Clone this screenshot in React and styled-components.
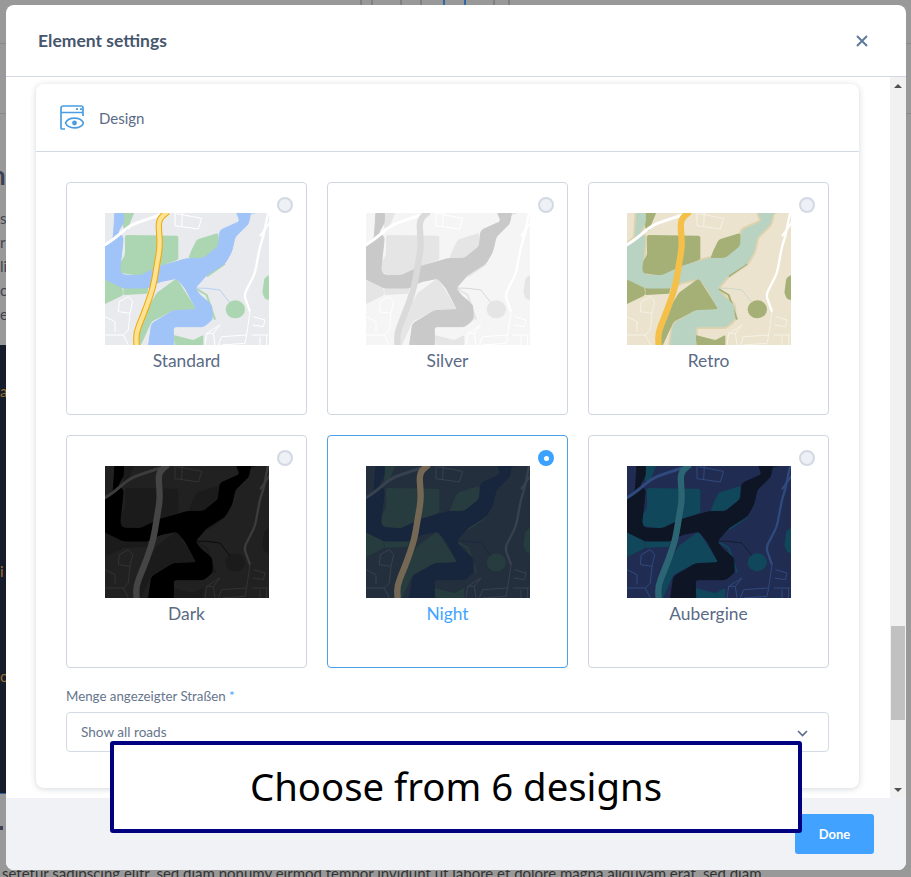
import React from "react";
import styled, { createGlobalStyle } from "styled-components";

const Global = createGlobalStyle`
  html, body { margin: 0; padding: 0; background: #999; }
  * { box-sizing: border-box; }
`;

const Page = styled.div`
  position: relative;
  width: 911px;
  height: 877px;
  overflow: hidden;
  background: #999;
  font-family: "Lato", "Noto Sans", sans-serif;
`;

/* ---- dimmed page behind the dialog ---- */
const Backdrop = styled.div`
  display: flex;
  flex-direction: column;
  height: 877px;
`;
const TopStrip = styled.div`
  height: 44px;
  flex: none;
  display: flex;
  align-items: flex-start;
  padding-left: 360px;
  border-bottom: 1px solid #8a8a8a;
`;
const Trace = styled.span`
  height: 5px;
  width: ${(p) => p.$w}px;
  margin-right: ${(p) => p.$gap}px;
  border-left: 2px solid ${(p) => p.$c};
  border-right: 2px solid ${(p) => p.$c};
`;
const SecondStrip = styled.div`
  height: 70px;
  flex: none;
  border-bottom: 1px solid #8a8a8a;
`;
const BackHeading = styled.div`
  margin-top: 46px;
  height: 30px;
  flex: none;
  font-size: 26px;
  line-height: 30px;
  font-weight: 700;
  color: #3b4258;
  text-indent: -9px;
`;
const BackText = styled.div`
  margin-top: 16px;
  height: 139px;
  flex: none;
  font-size: 15px;
  line-height: 24px;
  color: #3f4350;
  white-space: pre;
`;
const DarkBand = styled.div`
  width: 600px;
  height: 449px;
  flex: none;
  background: #161c2a;
  border-bottom: 1px solid #2a5f95;
  padding-top: 37px;
  font-size: 15px;
  color: #9a6c38;
`;
const DarkLine = styled.div`
  height: ${(p) => p.$h}px;
`;
const BackMark = styled.div`
  width: 3px;
  height: 4px;
  flex: none;
  margin-top: 32px;
  background: #3b4258;
`;
const BackFoot = styled.div`
  margin-top: 33px;
  padding-left: 2px;
  font-size: 15px;
  line-height: 20px;
  color: #333;
  white-space: nowrap;
`;

/* ---- dialog ---- */
const Modal = styled.div`
  position: absolute;
  left: 6px;
  top: 5px;
  width: 900px;
  height: 865px;
  background: #fff;
  border-radius: 8px;
  display: flex;
  flex-direction: column;
  overflow: hidden;
`;
const ModalHeader = styled.header`
  height: 72px;
  flex: none;
  border-bottom: 1px solid #d3d9e4;
  display: flex;
  align-items: center;
  justify-content: space-between;
  padding: 0 38px 0 32px;
`;
const ModalTitle = styled.h2`
  margin: 0;
  font-size: 17.5px;
  font-weight: 700;
  color: #46566d;
`;
const CloseIcon = styled.svg`
  width: 12px;
  height: 12px;
  display: block;
`;
const ModalBody = styled.div`
  flex: 1;
  min-height: 0;
  display: flex;
`;
const ScrollArea = styled.div`
  flex: 1;
  min-width: 0;
  padding: 7px 31px 0 30px;
  overflow: hidden;
`;
const Scrollbar = styled.div`
  width: 16px;
  flex: none;
  background: #f1f1f1;
  display: flex;
  flex-direction: column;
  align-items: center;
`;
const ArrowBox = styled.div`
  height: 17px;
  flex: none;
  display: flex;
  align-items: center;
  justify-content: center;
`;
const Arrow = styled.span`
  width: 0;
  height: 0;
  border-left: 4px solid transparent;
  border-right: 4px solid transparent;
  ${(p) => (p.$down ? "border-top: 4px solid #505050;" : "border-bottom: 4px solid #505050;")}
`;
const Thumb = styled.div`
  width: 14px;
  height: 94px;
  margin-top: 532px;
  background: #c1c1c1;
`;
const ArrowSpacer = styled.div`
  flex: 1;
`;

const Panel = styled.section`
  width: 823px;
  height: 704px;
  background: #fff;
  border-radius: 8px;
  box-shadow: 0 1px 6px rgba(40, 50, 70, 0.2);
`;
const PanelHeader = styled.div`
  height: 68px;
  border-bottom: 1px solid #d3d9e4;
  display: flex;
  align-items: center;
  gap: 15px;
  padding: 0 24px;
`;
const PanelTitle = styled.span`
  font-size: 15px;
  color: #5a6b85;
`;
const PanelIcon = styled.svg`
  width: 24px;
  height: 25px;
  display: block;
`;
const PanelBody = styled.div`
  padding: 30px;
`;
const DesignGrid = styled.div`
  display: grid;
  grid-template-columns: repeat(3, 241px);
  grid-auto-rows: 233px;
  gap: 20px;
`;
const Tile = styled.div`
  position: relative;
  border: 1px solid ${(p) => (p.$active ? "#4d9fe8" : "#cfd6e0")};
  border-radius: 4px;
  padding-top: 30px;
  display: flex;
  flex-direction: column;
  align-items: center;
`;
const TileMap = styled.svg`
  width: 164px;
  height: 132px;
  display: block;
  flex: none;
`;
const TileLabel = styled.span`
  margin-top: 5px;
  font-size: 17.4px;
  line-height: 22px;
  color: ${(p) => (p.$active ? "#42a5ff" : "#5a6b85")};
`;
const Radio = styled.span`
  position: absolute;
  top: 14px;
  right: 13px;
  width: 16px;
  height: 16px;
  border-radius: 50%;
  background: ${(p) => (p.$active ? "#3da2ff" : "#edf0f5")};
  border: ${(p) => (p.$active ? "none" : "2px solid #d3d9e3")};
  display: flex;
  align-items: center;
  justify-content: center;
  &::after {
    content: "";
    display: ${(p) => (p.$active ? "block" : "none")};
    width: 5px;
    height: 5px;
    border-radius: 50%;
    background: #fff;
  }
`;
const FieldLabel = styled.label`
  display: block;
  margin-top: 20px;
  font-size: 13.3px;
  line-height: 16px;
  color: #66758c;
`;
const Required = styled.span`
  color: #42a5ff;
`;
const SelectBox = styled.div`
  margin-top: 8px;
  height: 40px;
  border: 1px solid #d5dbe6;
  border-radius: 4px;
  display: flex;
  align-items: center;
  justify-content: space-between;
  padding: 0 20px 0 14px;
  font-size: 13.6px;
  color: #66758c;
`;
const Chevron = styled.svg`
  width: 11px;
  height: 7px;
  display: block;
  margin-top: 2px;
`;
const ModalFooter = styled.footer`
  height: 72px;
  flex: none;
  background: #f0f2f6;
  display: flex;
  justify-content: flex-end;
  padding: 16px 32px 0 0;
`;
const DoneButton = styled.button`
  width: 79px;
  height: 40px;
  border: none;
  border-radius: 3px;
  background: #41a2ff;
  color: #fff;
  font-family: inherit;
  font-size: 13px;
  font-weight: 700;
`;
const Caption = styled.div`
  position: absolute;
  left: 110px;
  top: 741px;
  width: 692px;
  height: 92px;
  background: #fff;
  border: 4px solid #000080;
  border-radius: 3px;
  display: flex;
  align-items: center;
  justify-content: center;
  padding-bottom: 3px;
  font-family: "Noto Sans", sans-serif;
  font-size: 38.3px;
  color: #000;
`;

/* rounds the corners of a polyline so the map shapes read as terrain */
const rounded = (pts, r, closed = true) => {
  const n = pts.length;
  const cut = (a, b, d) => {
    const len = Math.hypot(b[0] - a[0], b[1] - a[1]) || 1;
    const k = Math.min(d, len / 2) / len;
    return [a[0] + (b[0] - a[0]) * k, a[1] + (b[1] - a[1]) * k];
  };
  let d = "";
  for (let i = 0; i < n; i += 1) {
    const p = pts[i];
    if (!closed && (i === 0 || i === n - 1)) {
      d += `${i === 0 ? "M" : "L"}${p[0]} ${p[1]}`;
      continue;
    }
    const prev = pts[(i - 1 + n) % n];
    const next = pts[(i + 1) % n];
    const a = cut(p, prev, r);
    const b = cut(p, next, r);
    d += `${d ? "L" : "M"}${a[0]} ${a[1]}Q${p[0]} ${p[1]} ${b[0]} ${b[1]}`;
  }
  return closed ? `${d}Z` : d;
};

const WATER = rounded([
  [30, -6], [55, -6], [55, 30], [38, 58], [55, 72], [50, 120], [44, 170], [52, 186], [105, 188], [165, 160],
  [245, 137], [295, 136], [340, 100], [345, 52], [405, 25], [393, -6], [438, -6], [430, 33], [390, 72],
  [380, 116], [360, 151], [305, 186], [270, 226], [285, 246], [320, 276], [322, 320], [296, 341], [205, 341],
  [205, 402], [130, 402], [140, 332], [205, 293], [275, 290], [240, 225], [215, 196], [165, 206], [130, 225],
  [55, 225], [-6, 195], [-6, 100], [25, 75],
], 8);
const PARKS = [
  rounded([[60, 66], [220, 68], [220, 140], [165, 160], [105, 188], [45, 180], [40, 160], [60, 125]], 6),
  rounded([[275, 80], [340, 60], [343, 105], [295, 136], [250, 136], [260, 110]], 6),
  rounded([[-6, 196], [50, 212], [55, 246], [-6, 276]], 6),
  rounded([[55, 222], [130, 222], [127, 242], [55, 246]], 3),
  rounded([[215, 196], [275, 290], [205, 293], [140, 326], [105, 402], [90, 402], [125, 290], [155, 240]], 6),
  rounded([[205, 366], [265, 381], [295, 366], [295, 402], [210, 402]], 4),
  rounded([[498, 182], [478, 195], [472, 240], [480, 258], [498, 262]], 6),
  rounded([[48, -6], [90, -6], [75, 30], [65, 55], [55, 45]], 4),
];
const RIVER_BANK = "M305 190L360 152M275 228L305 246L330 320";
const THIN = "M210 0L210 38L280 48L290 16L215 2M232 0L230 40M40 296L43 266L70 251L83 266L75 301L40 296M75 301L70 351L55 366L0 366M0 311L30 326L30 356M55 366L70 396M435 296L425 366L350 371L340 396M445 311L480 321L475 341L443 336M345 336L305 361L300 396M305 361L325 361L330 396M325 361L345 336M425 366L420 391L350 396M440 366L490 366M465 371L465 396M485 366L485 396";
const MAJOR_ROAD = rounded([[-4, 98], [30, 76], [75, 36], [165, 6]], 30, false);
const EAST_ROAD = rounded([[490, -4], [475, 70], [465, 100], [450, 180], [417, 246], [435, 296]], 14, false);
const EAST_BRANCH = "M496 26L465 70";
const HIGHWAY = rounded([[188, -4], [160, 20], [165, 100], [145, 220], [125, 280], [93, 360], [95, 400]], 24, false);
const STREAM = "M270 225L305 226L345 231L360 251L375 269M435 5L455 -2";

const MapThumb = ({ c }) => (
  <TileMap viewBox="0 0 492 396" preserveAspectRatio="none" aria-hidden="true">
    <rect width="492" height="396" fill={c.land} />
    {c.edge && <path d={WATER} fill={c.edge} stroke={c.edge} strokeWidth="14" strokeLinejoin="round" />}
    <g fill={c.park}>
      {PARKS.map((d) => (
        <path key={d} d={d} />
      ))}
      <ellipse cx="391" cy="289" rx="29" ry="27" />
    </g>
    <path d={RIVER_BANK} fill="none" stroke={c.park} strokeWidth="6" strokeLinejoin="round" />
    <path d={WATER} fill={c.water} stroke={c.water} strokeWidth="3" strokeLinejoin="round" />
    <path d={STREAM} fill="none" stroke={c.water} strokeWidth="2" />
    <path d={THIN} fill="none" stroke={c.thin} strokeWidth="3" strokeLinejoin="round" />
    <path d={MAJOR_ROAD} fill="none" stroke={c.road} strokeWidth="9" />
    <path d={EAST_ROAD} fill="none" stroke={c.road} strokeWidth="7" />
    <path d={EAST_BRANCH} fill="none" stroke={c.road} strokeWidth="6" />
    <path d={HIGHWAY} fill="none" stroke={c.hwEdge || c.hw} strokeWidth="19" />
    {c.hwEdge && <path d={HIGHWAY} fill="none" stroke={c.hw} strokeWidth="13" />}
  </TileMap>
);

const DESIGNS = [
  { name: "Standard", c: { land: "#e8eaed", water: "#a0c3f8", park: "#acd6b1", road: "#fff", thin: "#fff", hw: "#fde293", hwEdge: "#f0a800" } },
  { name: "Silver", c: { land: "#f5f5f5", water: "#c9c9c9", park: "#e5e5e5", road: "#fff", thin: "#fff", hw: "#dadada" } },
  { name: "Retro", c: { land: "#ebe3cd", water: "#b9d3c2", park: "#a5b076", road: "#fff", thin: "#f5f1e6", hw: "#f5c04a", edge: "#dfd2ae" } },
  { name: "Dark", c: { land: "#212121", water: "#000", park: "#1b1b1b", road: "#3c3c3c", thin: "#333", hw: "#454545" } },
  { name: "Night", active: true, c: { land: "#242f3e", water: "#17263c", park: "#263c3f", road: "#38414e", thin: "#38414e", hw: "#746855" } },
  { name: "Aubergine", c: { land: "#202c52", water: "#0e1626", park: "#10475a", road: "#304a7d", thin: "#304a7d", hw: "#2c6675" } },
];

export default function App() {
  return (
    <>
      <Global />
      <Page>
        <Backdrop>
          <TopStrip>
            <Trace $w={13} $gap={27} $c="#808080" />
            <Trace $w={22} $gap={21} $c="#808080" />
            <Trace $w={23} $gap={27} $c="#2f6aa5" />
            <Trace $w={17} $gap={0} $c="#808080" />
          </TopStrip>
          <SecondStrip />
          <BackHeading>hr</BackHeading>
          <BackText>{"s\nri\nli\nci\ne"}</BackText>
          <DarkBand>
            <DarkLine $h={180}>a</DarkLine>
            <DarkLine $h={105}>i</DarkLine>
            <DarkLine $h={20}>c</DarkLine>
          </DarkBand>
          <BackMark />
          <BackFoot>setetur sadipscing elitr, sed diam nonumy eirmod tempor invidunt ut labore et dolore magna aliquyam erat, sed diam</BackFoot>
        </Backdrop>

        <Modal>
          <ModalHeader>
            <ModalTitle>Element settings</ModalTitle>
            <CloseIcon viewBox="0 0 12 12" aria-label="Close">
              <path d="M1 1L11 11M11 1L1 11" stroke="#5f7a9a" strokeWidth="2" />
            </CloseIcon>
          </ModalHeader>

          <ModalBody>
            <ScrollArea>
              <Panel>
                <PanelHeader>
                  <PanelIcon viewBox="0 0 24 25" fill="none" stroke="#4a9de0" strokeWidth="1.7">
                    <path d="M23 11V3a2 2 0 0 0-2-2H3a2 2 0 0 0-2 2v20a1 1 0 0 0 1 1h3" />
                    <path d="M1 7.5H23" />
                    <path d="M16 4.2H18M20 4.2H22" strokeWidth="1.8" />
                    <path d="M5.5 18c3-6.5 15-6.5 18 0-3 6.5-15 6.5-18 0Z" />
                    <circle cx="14.5" cy="18" r="2.4" fill="#4a9de0" stroke="none" />
                  </PanelIcon>
                  <PanelTitle>Design</PanelTitle>
                </PanelHeader>
                <PanelBody>
                  <DesignGrid>
                    {DESIGNS.map((d) => (
                      <Tile key={d.name} $active={d.active}>
                        <Radio $active={d.active} />
                        <MapThumb c={d.c} />
                        <TileLabel $active={d.active}>{d.name}</TileLabel>
                      </Tile>
                    ))}
                  </DesignGrid>
                  <FieldLabel>
                    Menge angezeigter Straßen <Required>*</Required>
                  </FieldLabel>
                  <SelectBox>
                    Show all roads
                    <Chevron viewBox="0 0 11 7" fill="none">
                      <path d="M1 1L5.5 5.5L10 1" stroke="#5a6b85" strokeWidth="1.6" />
                    </Chevron>
                  </SelectBox>
                </PanelBody>
              </Panel>
            </ScrollArea>
            <Scrollbar>
              <ArrowBox><Arrow /></ArrowBox>
              <Thumb />
              <ArrowSpacer />
              <ArrowBox><Arrow $down /></ArrowBox>
            </Scrollbar>
          </ModalBody>

          <ModalFooter>
            <DoneButton>Done</DoneButton>
          </ModalFooter>
        </Modal>

        <Caption>Choose from 6 designs</Caption>
      </Page>
    </>
  );
}
